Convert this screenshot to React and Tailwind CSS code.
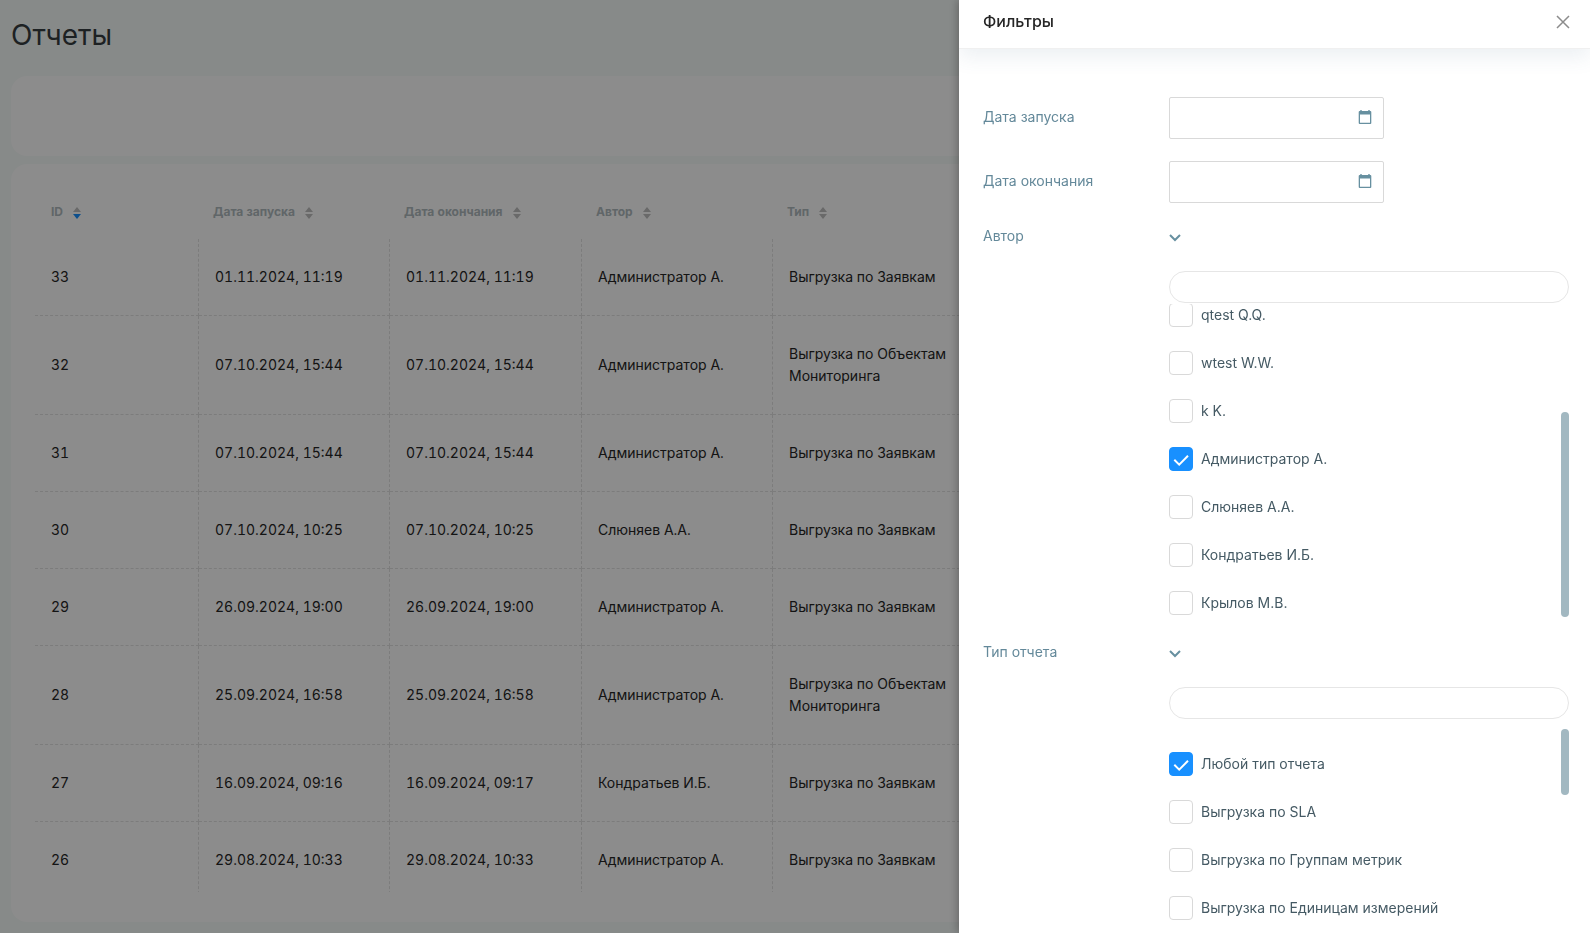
import React, { useState } from 'react';
import clsx from 'clsx';

const columns = [
  { key: 'id', title: 'ID', width: 'w-[164px]', sorted: 'desc' },
  { key: 'startedAt', title: 'Дата запуска', width: 'w-[191px]' },
  { key: 'finishedAt', title: 'Дата окончания', width: 'w-[192px]' },
  { key: 'author', title: 'Автор', width: 'w-[191px]' },
  { key: 'type', title: 'Тип', width: 'w-[192px]' },
];

const reports = [
  {
    id: 33,
    startedAt: '01.11.2024, 11:19',
    finishedAt: '01.11.2024, 11:19',
    author: 'Администратор А.',
    type: 'Выгрузка по Заявкам',
  },
  {
    id: 32,
    startedAt: '07.10.2024, 15:44',
    finishedAt: '07.10.2024, 15:44',
    author: 'Администратор А.',
    type: 'Выгрузка по Объектам Мониторинга',
  },
  {
    id: 31,
    startedAt: '07.10.2024, 15:44',
    finishedAt: '07.10.2024, 15:44',
    author: 'Администратор А.',
    type: 'Выгрузка по Заявкам',
  },
  {
    id: 30,
    startedAt: '07.10.2024, 10:25',
    finishedAt: '07.10.2024, 10:25',
    author: 'Слюняев А.А.',
    type: 'Выгрузка по Заявкам',
  },
  {
    id: 29,
    startedAt: '26.09.2024, 19:00',
    finishedAt: '26.09.2024, 19:00',
    author: 'Администратор А.',
    type: 'Выгрузка по Заявкам',
  },
  {
    id: 28,
    startedAt: '25.09.2024, 16:58',
    finishedAt: '25.09.2024, 16:58',
    author: 'Администратор А.',
    type: 'Выгрузка по Объектам Мониторинга',
  },
  {
    id: 27,
    startedAt: '16.09.2024, 09:16',
    finishedAt: '16.09.2024, 09:17',
    author: 'Кондратьев И.Б.',
    type: 'Выгрузка по Заявкам',
  },
  {
    id: 26,
    startedAt: '29.08.2024, 10:33',
    finishedAt: '29.08.2024, 10:33',
    author: 'Администратор А.',
    type: 'Выгрузка по Заявкам',
  },
];

const authors = [
  'qtest Q.Q.',
  'wtest W.W.',
  'k K.',
  'Администратор А.',
  'Слюняев А.А.',
  'Кондратьев И.Б.',
  'Крылов М.В.',
];

const reportTypes = [
  'Любой тип отчета',
  'Выгрузка по SLA',
  'Выгрузка по Группам метрик',
  'Выгрузка по Единицам измерений',
];

function SortIcon({ sorted }) {
  return (
    <svg viewBox="0 0 8 12" className="mt-0.5 h-3 w-2" aria-hidden="true">
      <path d="M4 0 L8 5 H0 Z" fill={sorted === 'asc' ? '#1890ff' : '#bfbfbf'} />
      <path
        d="M0 7 H8 L4 12 Z"
        fill={sorted === 'desc' ? '#1890ff' : '#bfbfbf'}
      />
    </svg>
  );
}

function ReportsTable() {
  return (
    <table className="w-full table-fixed border-separate border-spacing-0 text-left tabular-nums">
      <thead>
        <tr>
          {columns.map((column, i) => (
            <th
              key={column.key}
              className={clsx(
                'pt-3.5 pb-[17px] text-xs leading-5 font-bold text-[#b0babe]',
                column.width,
                i === 0 ? 'pl-4' : 'pl-3.5'
              )}
            >
              <button type="button" className="flex items-center gap-2.5">
                {column.title}
                <SortIcon sorted={column.sorted} />
              </button>
            </th>
          ))}
          <td />
        </tr>
      </thead>
      <tbody>
        {reports.map((report) => (
          <tr key={report.id}>
            {columns.map((column) => (
              <td
                key={column.key}
                className="border-r border-b border-dashed border-[#e2e2e2] py-[27px] pr-2 pl-4 text-sm leading-[22px] text-[#262626]"
              >
                {report[column.key]}
              </td>
            ))}
            <td className="border-b border-dashed border-[#e2e2e2]" />
          </tr>
        ))}
      </tbody>
    </table>
  );
}

function CalendarIcon() {
  return (
    <svg viewBox="0 0 14 14" className="h-3.5 w-3.5" aria-hidden="true">
      <path
        d="M2.3 0h1.4v1h6.6V0h1.4v1h.6a1 1 0 0 1 1 1v11a1 1 0 0 1-1 1H1.7a1 1 0 0 1-1-1V2a1 1 0 0 1 1-1h.6z M2 4.4v8.4h10V4.4z"
        fill="#6790a0"
        fillRule="evenodd"
      />
    </svg>
  );
}

function DateField({ id, label }) {
  return (
    <div className="grid grid-cols-[186px_1fr] items-center">
      <label htmlFor={id} className="pb-0.5 text-[#64899a]">
        {label}
      </label>
      <div className="flex h-[42px] w-[215px] items-center rounded-xs border border-[#d9d9d9] pr-[11px] pb-0.5 pl-3">
        <input id={id} type="text" className="min-w-0 flex-1 outline-none" />
        <CalendarIcon />
      </div>
    </div>
  );
}

function CheckItem({ label, defaultChecked }) {
  return (
    <li>
      <label className="flex items-center gap-2">
        <span className="relative h-6 w-6">
          <input
            type="checkbox"
            defaultChecked={defaultChecked}
            className="peer block h-6 w-6 appearance-none rounded border border-[#d9d9d9] bg-white checked:border-[#1890ff] checked:bg-[#1890ff]"
          />
          <svg
            viewBox="0 0 24 24"
            className="pointer-events-none absolute inset-0 hidden h-6 w-6 peer-checked:block"
            aria-hidden="true"
          >
            <path
              d="M5.3 12.8 L10.2 17.6 L19 8.8"
              fill="none"
              stroke="#fff"
              strokeWidth="2"
            />
          </svg>
        </span>
        <span className="leading-6 text-[#455a64]">{label}</span>
      </label>
    </li>
  );
}

function FilterGroup({ label, searchLabel, children }) {
  const [open, setOpen] = useState(true);

  return (
    <section className="grid grid-cols-[186px_1fr]">
      <h3 className="text-[#64899a]">{label}</h3>
      <div>
        <button
          type="button"
          aria-label={label}
          aria-expanded={open}
          onClick={() => setOpen(!open)}
          className="flex h-[22px] items-center"
        >
          <svg viewBox="0 0 12 8" className="mt-1 h-2 w-3" aria-hidden="true">
            <path
              d="M1 1 L6 6 L11 1"
              fill="none"
              stroke="#6790a0"
              strokeWidth="2"
            />
          </svg>
        </button>
        {open && (
          <>
            <input
              type="search"
              aria-label={searchLabel}
              className="mt-6 block h-8 w-full rounded-full border border-[#e6e6e6] px-4 outline-none"
            />
            {children}
          </>
        )}
      </div>
    </section>
  );
}

function FiltersDrawer() {
  return (
    <aside className="fixed inset-y-0 right-0 flex w-[631px] max-w-full flex-col overflow-hidden bg-white text-sm leading-[22px] shadow-[-2px_0_8px_rgba(0,0,0,0.25)]">
      <header className="flex h-[49px] shrink-0 items-center justify-between border-b border-[#f0f0f0] pr-5 pb-1.5 pl-6 shadow-[0_8px_20px_rgba(69,110,140,0.1)]">
        <h2 className="text-base font-medium text-[#262626]">Фильтры</h2>
        <button type="button" aria-label="Закрыть" className="pt-0.5">
          <svg viewBox="0 0 14 14" className="h-3.5 w-3.5" aria-hidden="true">
            <path
              d="M1 1 L13 13 M13 1 L1 13"
              fill="none"
              stroke="#8c8c8c"
              strokeWidth="1.5"
            />
          </svg>
        </button>
      </header>
      <form className="flex flex-col pt-12 pr-[21px] pl-6">
        <div className="flex flex-col gap-[22px]">
          <DateField id="started-at" label="Дата запуска" />
          <DateField id="finished-at" label="Дата окончания" />
          <FilterGroup label="Автор" searchLabel="Поиск автора">
            <div className="relative mt-px flex h-[313px] flex-col justify-end overflow-hidden pb-0.5">
              <ul className="flex flex-col gap-6">
                {authors.map((author) => (
                  <CheckItem
                    key={author}
                    label={author}
                    defaultChecked={author === 'Администратор А.'}
                  />
                ))}
              </ul>
              <div className="absolute right-0 bottom-0 h-[205px] w-2 rounded-full bg-[#a2b8c1]" />
            </div>
          </FilterGroup>
        </div>
        <div className="mt-6">
          <FilterGroup label="Тип отчета" searchLabel="Поиск типа отчета">
            <div className="relative mt-2.5 pt-[23px]">
              <ul className="flex flex-col gap-6">
                {reportTypes.map((type, i) => (
                  <CheckItem key={type} label={type} defaultChecked={i === 0} />
                ))}
              </ul>
              <div className="absolute top-0 right-0 h-[66px] w-2 rounded-full bg-[#a2b8c1]" />
            </div>
          </FilterGroup>
        </div>
      </form>
    </aside>
  );
}

export default function App() {
  return (
    <div className="font-['Inter','Liberation_Sans',sans-serif]">
      <main className="flex h-screen flex-col overflow-hidden bg-[#f6fbf9] px-[11px] pb-[11px]">
        <h1 className="pt-[15px] pb-[21px] text-[28px] leading-10 text-[#363d40]">
          Отчеты
        </h1>
        <div className="h-20 shrink-0 rounded-2xl bg-white" />
        <div className="mt-2 flex min-h-0 flex-1 flex-col rounded-2xl bg-white px-6 pt-6 pb-[30px]">
          <div className="min-h-0 flex-1 overflow-hidden">
            <ReportsTable />
          </div>
        </div>
      </main>
      <div className="fixed inset-0 bg-black/45" />
      <FiltersDrawer />
    </div>
  );
}
